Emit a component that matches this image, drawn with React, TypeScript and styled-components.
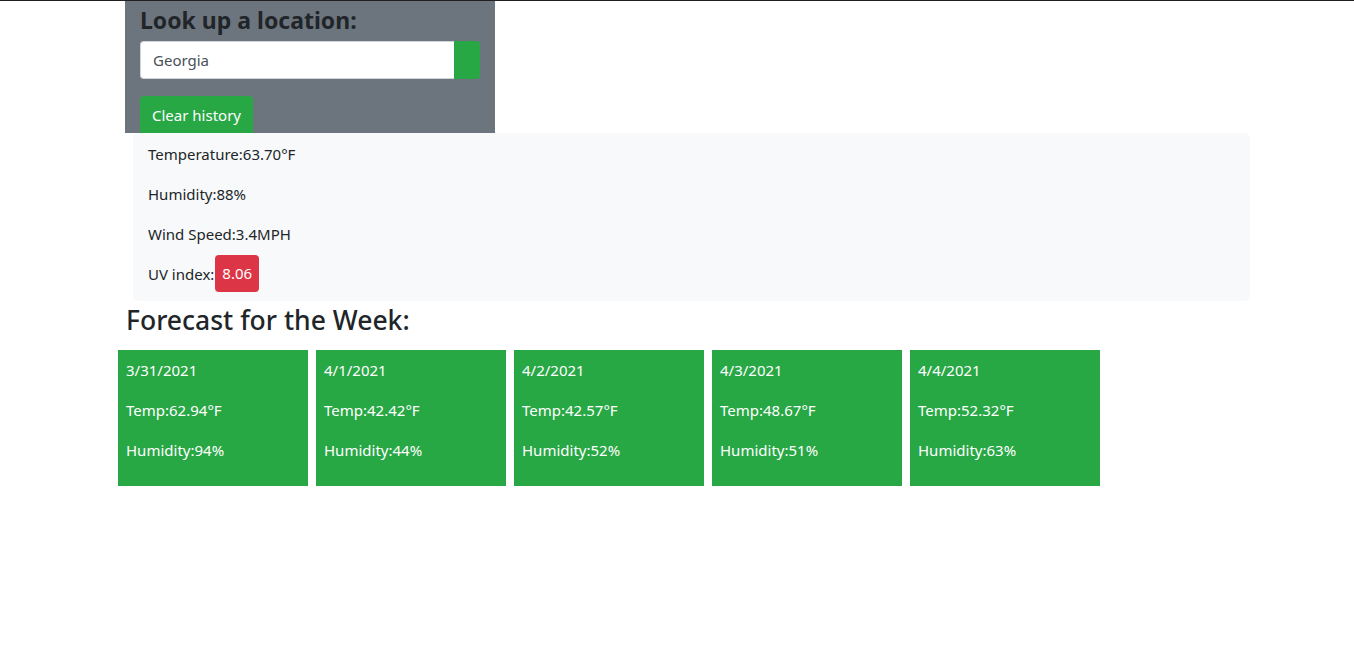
import React from "react";
import styled, { createGlobalStyle } from "styled-components";

const Global = createGlobalStyle`
  html, body { margin: 0; padding: 0; background: #fff; }
  body {
    border-top: 1px solid #1f1f1f;
    font-family: "Noto Sans", "Open Sans", Arial, sans-serif;
    font-size: 15px;
    color: #212529;
  }
  * { box-sizing: border-box; }
`;

const Page = styled.div`
  display: flex;
  flex-direction: column;
  align-items: flex-start;
`;

const SearchPanel = styled.section`
  margin-left: 125px;
  width: 370px;
  background: #6c757d;
  padding: 5px 15px 0;
  display: flex;
  flex-direction: column;
  align-items: flex-start;
`;

const Title = styled.h2`
  margin: 0 0 6px;
  font-size: 23px;
  font-weight: 700;
  line-height: 29px;
  color: #212529;
`;

const SearchRow = styled.div`
  display: flex;
  width: 340px;
  height: 38px;
`;

const Input = styled.input`
  flex: 1;
  height: 38px;
  border: 1px solid #ced4da;
  border-right: none;
  border-radius: 4px 0 0 4px;
  padding: 0 12px;
  font: inherit;
  font-size: 15px;
  color: #495057;
  background: #fff;
  outline: none;
`;

const SearchButton = styled.button`
  width: 26px;
  height: 38px;
  border: none;
  background: #28a745;
  border-radius: 0 4px 4px 0;
  padding: 0;
`;

const ClearButton = styled.button`
  margin-top: 17px;
  height: 37px;
  padding: 0 12px;
  border: none;
  border-radius: 4px 4px 0 0;
  background: #28a745;
  color: #fff;
  font: inherit;
  font-size: 15px;
`;

const CurrentPanel = styled.section`
  margin-left: 133px;
  width: 1117px;
  background: #f8f9fa;
  border-radius: 5px;
  padding: 9px 15px 15px;
  display: flex;
  flex-direction: column;
  gap: 16px;
`;

const Stat = styled.div`
  display: flex;
  align-items: center;
  height: 24px;
  line-height: 24px;
`;

const Badge = styled.span`
  display: inline-flex;
  align-items: center;
  height: 37px;
  margin: 0 0 2px 1px;
  padding: 0 7px;
  border-radius: 4px;
  background: #dc3545;
  color: #fff;
`;

const ForecastTitle = styled.h3`
  margin: 2px 0 13px 126px;
  font-size: 26.5px;
  font-weight: 500;
  line-height: 34px;
`;

const CardRow = styled.div`
  margin-left: 118px;
  display: flex;
  gap: 8px;
`;

const Card = styled.div`
  width: 190px;
  height: 136px;
  background: #28a745;
  color: #fff;
  padding: 8px;
  display: flex;
  flex-direction: column;
  gap: 16px;
  line-height: 24px;
`;

const forecast = [
  { date: "3/31/2021", temp: "62.94", hum: "94" },
  { date: "4/1/2021", temp: "42.42", hum: "44" },
  { date: "4/2/2021", temp: "42.57", hum: "52" },
  { date: "4/3/2021", temp: "48.67", hum: "51" },
  { date: "4/4/2021", temp: "52.32", hum: "63" },
];

export default function App() {
  return (
    <Page>
      <Global />
      <SearchPanel>
        <Title>Look up a location:</Title>
        <SearchRow>
          <Input defaultValue="Georgia" />
          <SearchButton aria-label="search" />
        </SearchRow>
        <ClearButton>Clear history</ClearButton>
      </SearchPanel>
      <CurrentPanel>
        <Stat>Temperature:63.70°F</Stat>
        <Stat>Humidity:88%</Stat>
        <Stat>Wind Speed:3.4MPH</Stat>
        <Stat>
          UV index:<Badge>8.06</Badge>
        </Stat>
      </CurrentPanel>
      <ForecastTitle>Forecast for the Week:</ForecastTitle>
      <CardRow>
        {forecast.map((d) => (
          <Card key={d.date}>
            <div>{d.date}</div>
            <div>Temp:{d.temp}°F</div>
            <div>Humidity:{d.hum}%</div>
          </Card>
        ))}
      </CardRow>
    </Page>
  );
}
